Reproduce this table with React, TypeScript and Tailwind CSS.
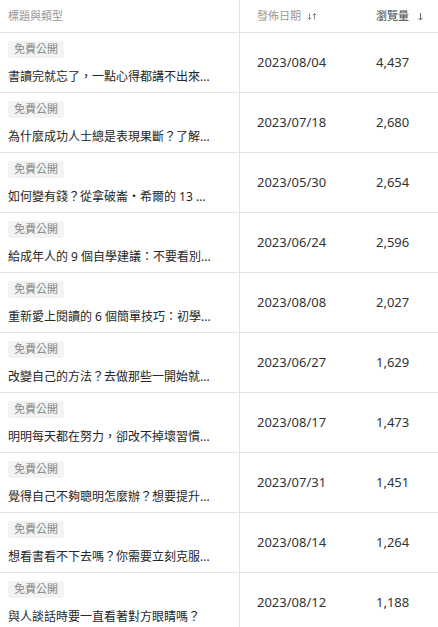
const ROWS = [
  { title: "書讀完就忘了，一點心得都講不出來...", date: "2023/08/04", views: "4,437" },
  { title: "為什麼成功人士總是表現果斷？了解...", date: "2023/07/18", views: "2,680" },
  { title: "如何變有錢？從拿破崙・希爾的 13 ...", date: "2023/05/30", views: "2,654" },
  { title: "給成年人的 9 個自學建議：不要看別...", date: "2023/06/24", views: "2,596" },
  { title: "重新愛上閱讀的 6 個簡單技巧：初學...", date: "2023/08/08", views: "2,027" },
  { title: "改變自己的方法？去做那些一開始就...", date: "2023/06/27", views: "1,629" },
  { title: "明明每天都在努力，卻改不掉壞習慣...", date: "2023/08/17", views: "1,473" },
  { title: "覺得自己不夠聰明怎麼辦？想要提升...", date: "2023/07/31", views: "1,451" },
  { title: "想看書看不下去嗎？你需要立刻克服...", date: "2023/08/14", views: "1,264" },
  { title: "與人談話時要一直看著對方眼睛嗎？", date: "2023/08/12", views: "1,188" },
];

const FONT = "font-['Noto_Sans','Noto_Sans_CJK_TC',sans-serif]";

function SortBoth() {
  return (
    <svg width="10" height="9" viewBox="0 0 10 9" fill="none" stroke="#888" strokeWidth="1" className="ml-1.5">
      <path d="M2.5 1.5v6M0.8 5.8l1.7 1.7 1.7-1.7" />
      <path d="M7.5 7.5v-6M5.8 3.2l1.7-1.7 1.7 1.7" />
    </svg>
  );
}

function SortDown() {
  return (
    <svg width="7" height="9" viewBox="0 0 7 9" fill="none" stroke="#666" strokeWidth="1" className="ml-2">
      <path d="M3.5 1v7M1.5 6l2 2 2-2" />
    </svg>
  );
}

export default function App() {
  return (
    <div className={`w-[438px] bg-white ${FONT}`}>
      {/* header */}
      <div className="grid grid-cols-[240px_120px_1fr] h-[33px] border-b border-[#e3e3e3] text-[11px]">
        <div className="flex items-center pl-2 text-[#999] border-r border-[#e3e3e3]">標題與類型</div>
        <div className="flex items-center pl-[17px] text-[#999]">
          發佈日期
          <SortBoth />
        </div>
        <div className="flex items-center pl-4 text-[#444]">
          瀏覽量
          <SortDown />
        </div>
      </div>

      {ROWS.map((r) => (
        <div key={r.date} className="grid grid-cols-[240px_120px_1fr] h-[60px] border-b border-[#e3e3e3]">
          <div className="flex flex-col items-start pl-2 pt-2 border-r border-[#e3e3e3]">
            <span className="h-[17px] px-[6px] flex items-center rounded-[3px] bg-[#f3f3f3] text-[11px] text-[#888]">
              免費公開
            </span>
            <div className="mt-[10px] text-[12px] leading-[18px] text-[#262626] whitespace-nowrap">{r.title}</div>
          </div>
          <div className="flex items-center pl-[17px] text-[13px] text-[#333]">{r.date}</div>
          <div className="flex items-center pl-4 text-[13px] text-[#333]">{r.views}</div>
        </div>
      ))}
    </div>
  );
}
